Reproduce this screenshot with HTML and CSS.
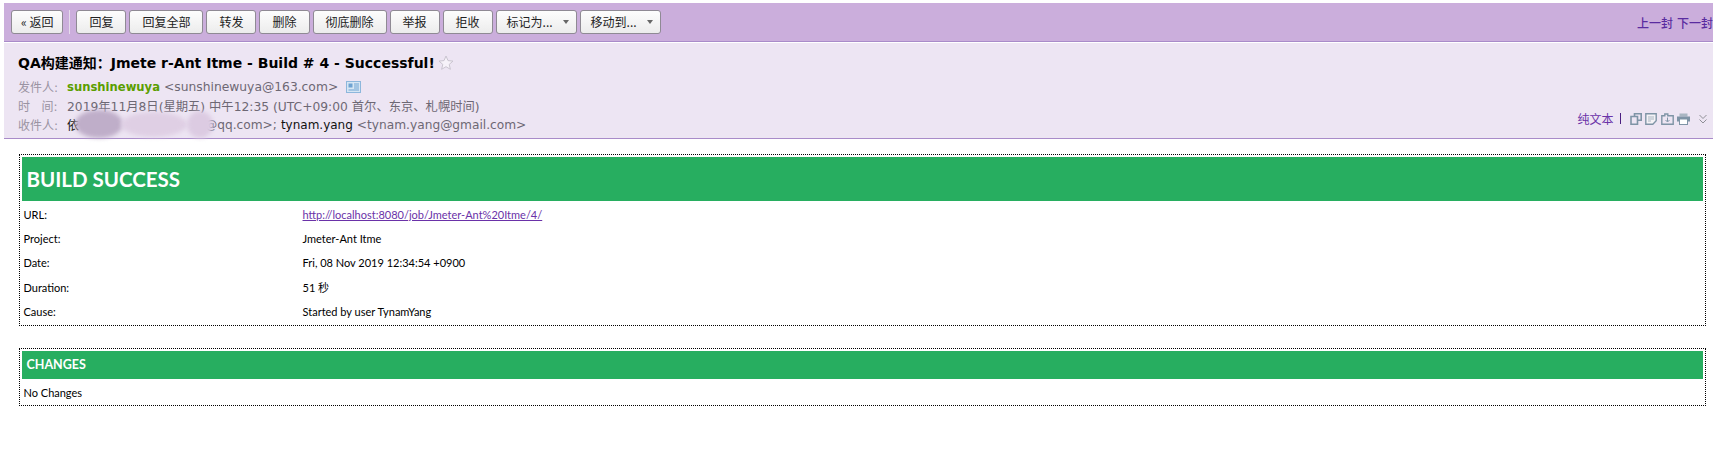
FILE: index.html
```html
<!DOCTYPE html>
<html lang="en">
<head>
  <meta charset="UTF-8">
  <meta name="viewport" content="width=device-width, initial-scale=1.0">
  <title>QA构建通知</title>
  <link rel="stylesheet" href="styles.css">
</head>
<body>
  <div class="mail-top">
    <div class="toolbar">
      <button class="btn">« 返回</button>
      <span class="tool-sep"></span>
      <button class="btn">回复</button>
      <button class="btn">回复全部</button>
      <button class="btn">转发</button>
      <button class="btn">删除</button>
      <button class="btn">彻底删除</button>
      <button class="btn">举报</button>
      <button class="btn">拒收</button>
      <button class="btn btn-menu">标记为... <span class="caret"></span></button>
      <button class="btn btn-menu">移动到... <span class="caret"></span></button>
      <div class="pager"><a>上一封</a><a>下一封</a></div>
    </div>

    <div class="mail-head">
      <div class="subject">
        <span>QA构建通知：Jmete r-Ant Itme - Build # 4 - Successful!</span>
        <svg class="star" width="16" height="15" viewBox="0 0 16 15"><path d="M8 1l2 4.6 5 .5-3.8 3.3 1.2 4.9L8 11.700l-4.400 2.600 1.200-4.900L1 6.100l5-.5z" fill="#f6f2f9" stroke="#c9c4cf"/></svg>
      </div>
      <div class="meta-row meta-from">
        <span class="meta-label">发件人:</span>
        <b class="sender">sunshinewuya</b>
        <span class="addr">&lt;sunshinewuya@163.com&gt;</span>
        <svg class="card" width="15" height="12" viewBox="0 0 15 12"><rect x=".5" y=".5" width="14" height="11" fill="#d6e6f4" stroke="#8db7dc"/><rect x="2.500" y="2.500" width="4" height="4" fill="#6fa3d2"/><path d="M8 3h5M8 5h5M8 7h5M2.500 9h10.500" stroke="#6fa3d2"/></svg>
      </div>
      <div class="meta-row meta-time">
        <span class="meta-label">时&nbsp;&nbsp;&nbsp;间:</span>
        <span class="addr">2019年11月8日(星期五) 中午12:35 (UTC+09:00 首尔、东京、札幌时间)</span>
      </div>
      <div class="meta-row meta-to">
        <span class="meta-label">收件人:</span>
        <span class="name first-name">依</span>
        <span class="addr">@qq.com&gt;;</span>
        <span class="name">tynam.yang</span>
        <span class="addr">&lt;tynam.yang@gmail.com&gt;</span>
        <div class="smudges">
          <i class="smudge s1"></i>
          <i class="smudge s2"></i>
          <i class="smudge s3"></i>
        </div>
      </div>
      <div class="head-tools">
        <a class="plain">纯文本</a>
        <span class="head-sep"></span>
        <svg width="12" height="12" viewBox="0 0 12 12"><path d="M4.500 3V.8h6.700v6.400H8M1 3.500h6.500v7.700H1z" fill="none" stroke="#7f94a6" stroke-width="1.600"/></svg>
        <svg width="12" height="12" viewBox="0 0 12 12"><path d="M.8.800h10.400v7l-3.400 3.400H.8z" fill="#f4f2f6" stroke="#7f94a6" stroke-width="1.400"/><path d="M3 4h6M3 6h6M3 8h3" stroke="#a9b6c2"/></svg>
        <svg width="13" height="12" viewBox="0 0 13 12"><path d="M.8 11.200V2.800h3V1h3v1.800h5.400v8.400z" fill="none" stroke="#7f94a6" stroke-width="1.400"/><path d="M6.500 4.500v4M4.500 7l2 2 2-2" fill="none" stroke="#7f94a6"/></svg>
        <svg width="13" height="12" viewBox="0 0 13 12"><rect x="2.500" y=".5" width="8" height="3" fill="#a9b6c2"/><rect y="3.500" width="13" height="5" fill="#7f94a6"/><rect x="2.500" y="6" width="8" height="5.500" fill="#fff" stroke="#7f94a6"/></svg>
        <svg class="more" width="8" height="10" viewBox="0 0 8 10"><path d="M.5 1L4 4.500 7.500 1M.5 5.500L4 9l3.500-3.500" fill="none" stroke="#8f8f96"/></svg>
      </div>
    </div>
  </div>

  <div class="report">
    <table class="box">
      <tr><td class="build-title" colspan="2">BUILD SUCCESS</td></tr>
      <tr><td class="key">URL:</td><td><a class="link">http://localhost:8080/job/Jmeter-Ant%20Itme/4/</a></td></tr>
      <tr><td class="key">Project:</td><td>Jmeter-Ant Itme</td></tr>
      <tr><td class="key">Date:</td><td>Fri, 08 Nov 2019 12:34:54 +0900</td></tr>
      <tr><td class="key">Duration:</td><td>51 秒</td></tr>
      <tr><td class="key">Cause:</td><td>Started by user TynamYang</td></tr>
    </table>

    <table class="box box-changes">
      <tr><td class="section-title">CHANGES</td></tr>
      <tr><td>No Changes</td></tr>
    </table>
  </div>
</body>
</html>
```

FILE: styles.css
```css
html, body {
  height: 100%;
}
body {
  margin: 0;
  padding: 3px 0 0 4px;
  box-sizing: border-box;
  background-color: #fff;
  color: #000;
  font-family: "DejaVu Sans", "Noto Sans CJK SC", sans-serif;
  overflow: hidden;
}

/* top bar */
.toolbar {
  display: flex;
  align-items: center;
  gap: 3px;
  height: 38px;
  padding: 0 0 0 7px;
  background-color: #cbaedc;
  border-bottom: 1px solid #a98bc9;
  overflow: hidden;
}
.btn {
  height: 24px;
  padding: 0 12px;
  background: linear-gradient(#fdfdfd, #ececec);
  border: 1px solid #8f8a94;
  border-radius: 3px;
  color: #222;
  font-family: "Noto Sans CJK SC", sans-serif;
  font-size: 12px;
  line-height: 22px;
  white-space: nowrap;
}
.btn:first-child {
  padding: 0 9px;
}
.btn-menu {
  display: flex;
  align-items: center;
  justify-content: space-between;
  padding: 0 7px 0 10px;
  width: 81px;
}
.caret {
  width: 0;
  height: 0;
  border-left: 3px solid transparent;
  border-right: 3px solid transparent;
  border-top: 4px solid #666;
}
.tool-sep {
  width: 1px;
  height: 24px;
  margin: 0 3px;
  background-color: #e6dcec;
}
.pager {
  display: flex;
  flex: none;
  gap: 4px;
  margin-left: auto;
  color: #5a2ca0;
  font-family: "Noto Sans CJK SC", sans-serif;
  font-size: 12px;
  font-weight: 500;
}

/* mail header */
.mail-head {
  position: relative;
  height: 96px;
  margin-top: 1px;
  padding: 9px 0 0 14px;
  box-sizing: border-box;
  background-color: #ede5f3;
  border-bottom: 1px solid #a98bc9;
}
.subject {
  display: flex;
  align-items: center;
  gap: 3px;
  height: 20px;
  font-size: 14px;
  font-weight: bold;
  white-space: nowrap;
}
.meta-row {
  display: flex;
  align-items: center;
  gap: 4px;
  height: 19px;
  font-size: 12.300px;
  white-space: nowrap;
}
.meta-from {
  margin-top: 5px;
}
.meta-to {
  position: relative;
}
.meta-to .addr {
  font-size: 12.200px;
}
.meta-label {
  width: 45px;
  color: #9a93a2;
  font-size: 12px;
}
.sender {
  color: #5a9e00;
  font-size: 11.600px;
}
.addr {
  color: #6d6874;
}
.name {
  color: #111;
  font-size: 12px;
}
.first-name {
  width: 134px;
}
.card {
  margin-left: 4px;
}

/* the blurred out address */
.smudges {
  position: absolute;
  top: -6px;
  left: 57px;
  width: 140px;
  height: 30px;
}
.smudge {
  position: absolute;
  border-radius: 50%;
  filter: blur(2px);
}
.s1 {
  left: 0;
  top: 1px;
  width: 48px;
  height: 28px;
  background-color: #bfaec9;
}
.s2 {
  left: 46px;
  top: 3px;
  width: 66px;
  height: 25px;
  background-color: #dfcfe4;
}
.s3 {
  left: 112px;
  top: 2px;
  width: 26px;
  height: 27px;
  background-color: #dccbe2;
}

.head-tools {
  position: absolute;
  right: 6px;
  bottom: 11px;
  display: flex;
  align-items: center;
  gap: 3.500px;
}
.plain {
  color: #6a32a8;
  font-family: "Noto Sans CJK SC", sans-serif;
  font-size: 12px;
}
.head-sep {
  width: 1px;
  height: 11px;
  margin: 0 5.500px 0 2.500px;
  background-color: #4b1f80;
}
.more {
  margin-left: 5.500px;
}

/* build report */
.report {
  padding: 15px 7px 0 14.500px;
}
.box {
  width: 100%;
  border: 1px dotted #000;
  border-spacing: 2px;
  border-collapse: separate;
  font-family: Lato, "Noto Sans CJK SC", sans-serif;
  font-size: 11px;
}
.box td {
  height: 22.400px;
  padding: 0 2px;
  vertical-align: middle;
}
.box-changes {
  margin-top: 22px;
}
.key {
  width: 273px;
}
.box .build-title {
  height: 44px;
  padding: 0 5px;
  background-color: #27ae60;
  color: #fff;
  font-size: 20.500px;
  font-weight: bold;
}
.box .section-title {
  height: 28px;
  padding: 0 5px;
  background-color: #27ae60;
  color: #fff;
  font-size: 12.500px;
  font-weight: bold;
}
.link {
  color: #6a32a8;
  text-decoration: underline;
}
```
